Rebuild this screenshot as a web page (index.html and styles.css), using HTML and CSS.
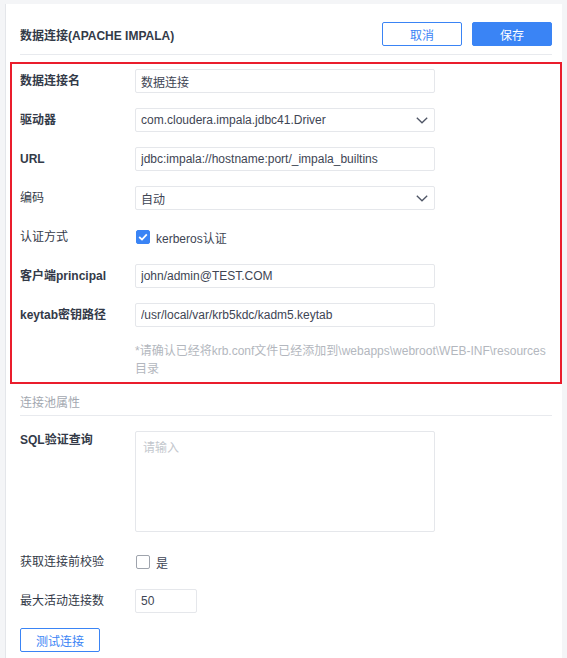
FILE: index.html
```html
<!DOCTYPE html>
<html lang="zh-CN">
<head>
  <meta charset="UTF-8" />
  <meta name="viewport" content="width=device-width, initial-scale=1.0"/>
  <title>数据连接</title>
  <link rel="stylesheet" href="styles.css">
</head>
<body>
  <div class="panel">
    <!-- Header -->
    <div class="panel-header">
      <div class="panel-title">数据连接(APACHE IMPALA)</div>
      <div class="header-actions">
        <button class="btn btn-plain">取消</button>
        <button class="btn btn-primary">保存</button>
      </div>
    </div>

    <!-- Connection settings -->
    <div class="highlight-box">
      <div class="form-row">
        <label class="form-label is-required">数据连接名</label>
        <input class="form-input" type="text" value="数据连接">
      </div>
      <div class="form-row">
        <label class="form-label is-required">驱动器</label>
        <div class="form-input form-select">
          <span>com.cloudera.impala.jdbc41.Driver</span>
          <svg class="select-arrow" width="12" height="7" viewBox="0 0 12 7"><polyline points="0.8,0.8 6,5.8 11.2,0.8" fill="none" stroke="#4f5666" stroke-width="1.3"/></svg>
        </div>
      </div>
      <div class="form-row">
        <label class="form-label is-required">URL</label>
        <input class="form-input" type="text" value="jdbc:impala://hostname:port/_impala_builtins">
      </div>
      <div class="form-row">
        <label class="form-label">编码</label>
        <div class="form-input form-select">
          <span>自动</span>
          <svg class="select-arrow" width="12" height="7" viewBox="0 0 12 7"><polyline points="0.8,0.8 6,5.8 11.2,0.8" fill="none" stroke="#4f5666" stroke-width="1.3"/></svg>
        </div>
      </div>
      <div class="form-row">
        <label class="form-label">认证方式</label>
        <span class="checkbox is-checked">
          <svg width="10" height="8" viewBox="0 0 10 8"><polyline points="1.2,4 4,6.6 8.8,1.4" fill="none" stroke="#fff" stroke-width="1.8"/></svg>
        </span>
        <span class="checkbox-text">kerberos认证</span>
      </div>
      <div class="form-row">
        <label class="form-label is-required">客户端principal</label>
        <input class="form-input" type="text" value="john/admin@TEST.COM">
      </div>
      <div class="form-row">
        <label class="form-label is-required">keytab密钥路径</label>
        <input class="form-input" type="text" value="/usr/local/var/krb5kdc/kadm5.keytab">
      </div>
      <div class="form-hint">*请确认已经将krb.conf文件已经添加到\webapps\webroot\WEB-INF\resources<span class="nowrap">目录</span></div>
    </div>

    <!-- Pool settings -->
    <div class="section-title">连接池属性</div>
    <div class="form-row form-row-top">
      <label class="form-label is-required">SQL验证查询</label>
      <textarea class="form-input form-textarea" placeholder="请输入"></textarea>
    </div>
    <div class="form-row">
      <label class="form-label">获取连接前校验</label>
      <span class="checkbox"></span>
      <span class="checkbox-text">是</span>
    </div>
    <div class="form-row">
      <label class="form-label">最大活动连接数</label>
      <input class="form-input form-input-small" type="text" value="50">
    </div>
    <button class="btn btn-plain">测试连接</button>
  </div>
</body>
</html>
```

FILE: styles.css
```css
body {
  margin: 0;
  font-family: 'Liberation Sans', 'Noto Sans CJK SC', sans-serif;
  font-size: 12px;
  background-color: #f4f5f7;
  color: #3a4150;
  overflow: hidden;
}

.panel {
  box-sizing: border-box;
  margin: 4px 0 0 5px;
  width: 557px;
  height: 654px;
  padding: 18px 10px 0 14px;
  background-color: #ffffff;
  border-left: 1px solid #e4e6ea;
}

.panel-header {
  display: flex;
  justify-content: space-between;
  align-items: center;
  padding-bottom: 8px;
  border-bottom: 1px solid #e8eaee;
}

.panel-title {
  font-weight: bold;
  color: #333a48;
}

.header-actions {
  display: flex;
  gap: 10px;
}

.btn {
  width: 80px;
  height: 24px;
  padding: 0;
  border-radius: 2px;
  font-family: inherit;
  font-size: 12px;
  cursor: pointer;
}

.btn-plain {
  background-color: #ffffff;
  border: 1px solid #3a84f5;
  color: #3a84f5;
}

.btn-primary {
  background-color: #3a84f5;
  border: 1px solid #3a84f5;
  color: #ffffff;
}

.highlight-box {
  margin: 7px -10px 0;
  padding: 5px 8px 4px;
  border: 2px solid #ea1d2c;
}

.form-row {
  display: flex;
  align-items: center;
  min-height: 24px;
  margin-bottom: 15px;
}

.form-row-top {
  align-items: flex-start;
  margin-top: 15px;
  margin-bottom: 18px;
}

.form-row-top .form-label {
  line-height: 18px;
}

.form-label {
  width: 115px;
  flex-shrink: 0;
  color: #333a48;
  line-height: 24px;
}

.form-label.is-required {
  font-weight: bold;
}

.form-input {
  box-sizing: border-box;
  width: 300px;
  height: 24px;
  padding: 0 5px;
  border: 1px solid #e5e7eb;
  border-radius: 2px;
  background-color: #ffffff;
  font-family: inherit;
  font-size: 12px;
  color: #3e4554;
  outline: none;
}

.form-select {
  display: flex;
  align-items: center;
  justify-content: space-between;
  padding-right: 6px;
}

.select-arrow {
  display: block;
}

.form-textarea {
  height: 101px;
  padding: 8px 7px;
  resize: none;
  line-height: 16px;
}

.form-textarea::placeholder {
  color: #c3c7cd;
}

.form-input-small {
  width: 62px;
}

.checkbox {
  box-sizing: border-box;
  width: 14px;
  height: 14px;
  border: 1px solid #9fa4ad;
  border-radius: 2px;
  display: flex;
  align-items: center;
  justify-content: center;
  margin-left: 1px;
}

.checkbox.is-checked {
  background-color: #3a84f5;
  border-color: #3a84f5;
}

.checkbox-text {
  margin-left: 6px;
  color: #3e4554;
}

.form-hint {
  margin-left: 115px;
  line-height: 18px;
  color: #b3b7be;
}

.nowrap {
  white-space: nowrap;
}

.section-title {
  margin-top: 10px;
  padding-bottom: 3px;
  line-height: 18px;
  color: #a3a8b0;
  border-bottom: 1px solid #e8eaee;
}
```
